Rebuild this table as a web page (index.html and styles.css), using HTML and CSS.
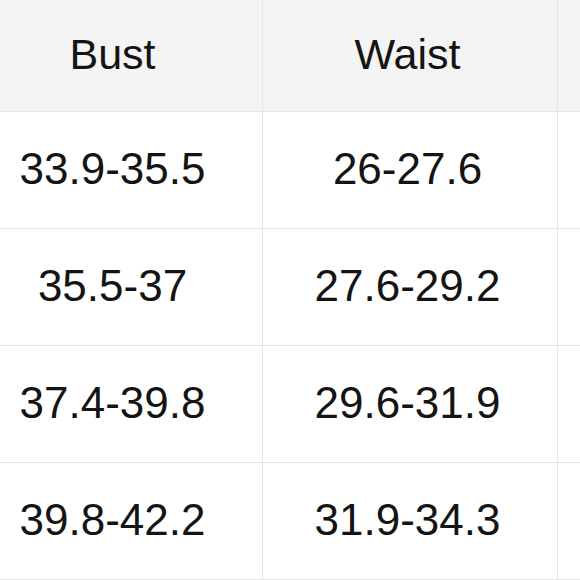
FILE: index.html
```html
<!DOCTYPE html>
<html>
<head>
<meta charset="utf-8">
<link rel="stylesheet" href="styles.css">
</head>
<body>
<table class="size-table">
  <thead>
    <tr><th>Bust</th><th>Waist</th><th></th></tr>
  </thead>
  <tbody>
    <tr><td>33.9-35.5</td><td>26-27.6</td><td></td></tr>
    <tr><td>35.5-37</td><td>27.6-29.2</td><td></td></tr>
    <tr><td>37.4-39.8</td><td>29.6-31.9</td><td></td></tr>
    <tr><td>39.8-42.2</td><td>31.9-34.3</td><td></td></tr>
  </tbody>
</table>
</body>
</html>
```

FILE: styles.css
```css
html, body {
  margin: 0;
  padding: 0;
  width: 580px;
  height: 580px;
  overflow: hidden;
  background: #ffffff;
}

.size-table {
  border-collapse: collapse;
  table-layout: fixed;
  width: 882px;
  margin-left: -33px;
  margin-top: -1px;
  font-family: "Liberation Sans", Arial, sans-serif;
  color: #141414;
}

.size-table th,
.size-table td {
  width: 289px;
  border: 1px solid #e4e4e4;
  text-align: center;
  vertical-align: middle;
  padding: 0 5px 2px 0;
}

.size-table th {
  height: 109px;
  background: #f4f4f4;
  font-weight: normal;
  font-size: 43px;
}

.size-table td {
  height: 114px;
  font-size: 44px;
}
```
